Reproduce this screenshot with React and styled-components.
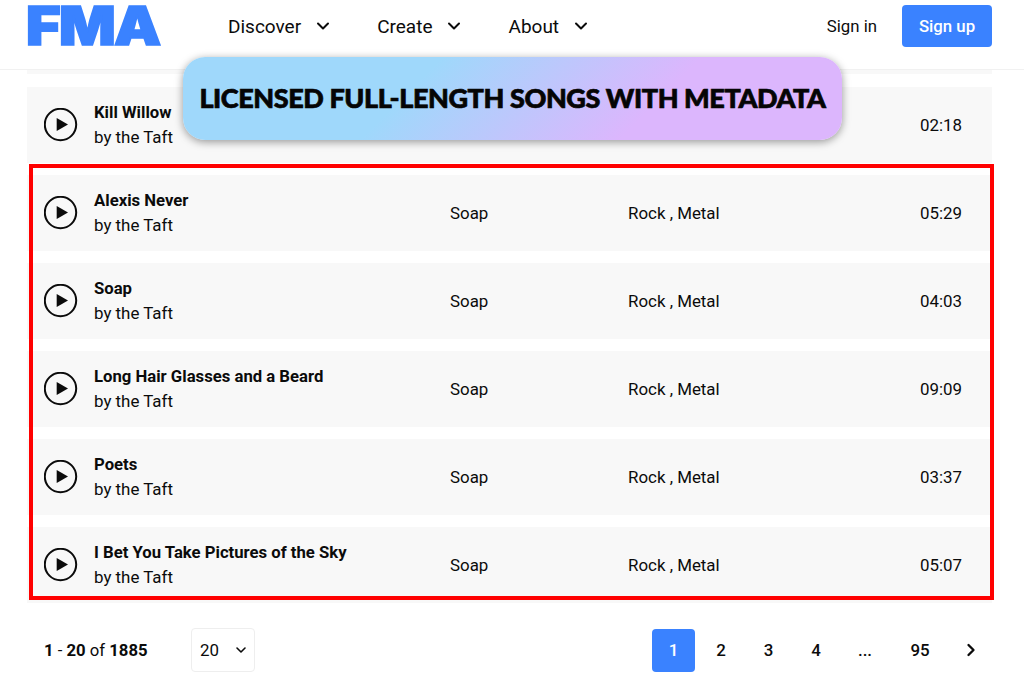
import React from "react";
import styled, { createGlobalStyle } from "styled-components";

const Global = createGlobalStyle`
  html, body { margin: 0; padding: 0; background: #fff; overflow: hidden; }
  body { font-family: Roboto, "Liberation Sans", sans-serif; color: #0b0b0b; }
`;
const Page = styled.div`position: relative; width: 1024px; height: 683px; overflow: hidden;`;
const Header = styled.header`
  display: flex; align-items: center; height: 52px; padding: 0 32px 17px 26px;
  border-bottom: 1px solid #f1f1f1;
`;
const Logo = styled.div`
  width: 150px; height: 52px; margin-right: 52px; color: #3a82ff;
  font: 900 53px/52px Inter, sans-serif; -webkit-text-stroke: 1.6px #3a82ff;
  white-space: nowrap; letter-spacing: -1.5px; transform: scaleX(1.12); transform-origin: left center;
`;
const Nav = styled.nav`display: flex; flex: 1; gap: 44px; align-items: center;`;
const NavItem = styled.div`display: flex; align-items: center; gap: 12px; font-size: 19px;`;
const Auth = styled.div`display: flex; align-items: center; gap: 25px; font-size: 16.8px;`;
const SignUp = styled.div`
  width: 90px; height: 42px; background: #3a82ff; color: #fff; border-radius: 4px; font-weight: 500;
  display: flex; align-items: center; justify-content: center;
`;
const List = styled.main`display: flex; flex-direction: column; gap: 12px; margin: 0 32px 0 27px;`;
const Sliver = styled.div`height: 4px; background: #f8f8f8; margin-bottom: 1px;`;
const Row = styled.div`
  display: grid; grid-template-columns: 33px 373px 178px 1fr auto; align-items: center;
  height: 76px; flex: none; background: #f8f8f8; padding: 0 30px 0 17px; font-size: 16.9px;
`;
const Info = styled.div`
  margin-left: 17px; display: flex; flex-direction: column; gap: 3px; line-height: 20.5px;
`;
const Title = styled.div`font-weight: 700; font-size: 16.7px;`;
const Cell = styled.div``;
const Pager = styled.footer`display: flex; align-items: center; margin: 25px 32px 0 44px; height: 44px;`;
const Count = styled.div`font-size: 16.7px; width: 147px; b { font-weight: 700; }`;
const Select = styled.div`
  width: 64px; height: 44px; border: 1px solid #eee; border-radius: 4px; display: flex; align-items: center;
  justify-content: space-between; padding: 0 5px 0 8px; box-sizing: border-box; font-size: 16.9px;
`;
const Pages = styled.div`display: flex; align-items: center; gap: 4.5px; margin-left: auto;`;
const PageBtn = styled.div`
  width: ${p => p.$w || 43}px; height: 43px; border-radius: 4px; display: flex;
  align-items: center; justify-content: center; font-size: 16.9px; font-weight: 500;
  margin-right: ${p => p.$mr || 0}px;
  background: ${p => (p.$active ? "#3a82ff" : "transparent")}; color: ${p => (p.$active ? "#fff" : "#0b0b0b")};
`;
const Frame = styled.div`
  position: absolute; left: 29px; top: 164px; width: 965px; height: 436px; box-sizing: border-box;
  border: 4px solid #ff0000; pointer-events: none;
`;
const Banner = styled.div`
  position: absolute; left: 183px; top: 57px; width: 659px; height: 83px; border-radius: 22px;
  display: flex; align-items: center; justify-content: center; padding-bottom: 2px; box-sizing: border-box;
  background: linear-gradient(135deg, #9fd8fb 0%, #9fd8fb 35%, #dcb6fd 70%, #dcb6fd 100%);
  box-shadow: 0 2px 9px rgba(0,0,0,.4);
  font: 900 27px/1 Lato, sans-serif; color: #050505; -webkit-text-stroke: .7px #050505;
  letter-spacing: -.42px; white-space: nowrap;
`;

const Chevron = ({ size = 20, weight = 2.4, dir = "down" }) => (
  <svg width={size} height={size} viewBox="0 0 24 24" fill="none" stroke="currentColor" strokeWidth={weight} strokeLinecap="round" strokeLinejoin="round">
    <path d={dir === "down" ? "M6 9l6 6 6-6" : "M9 6l6 6-6 6"} />
  </svg>
);
const Play = () => (
  <svg width="34" height="34" viewBox="0 0 34 34" style={{ display: "block" }}>
    <circle cx="16.5" cy="16.5" r="15.7" fill="none" stroke="#0b0b0b" strokeWidth="2" />
    <path d="M12.7 10L24 16.5 12.7 23z" fill="#0b0b0b" />
  </svg>
);

const songs = [
  ["Kill Willow", "02:18"],
  ["Alexis Never", "05:29"],
  ["Soap", "04:03"],
  ["Long Hair Glasses and a Beard", "09:09"],
  ["Poets", "03:37"],
  ["I Bet You Take Pictures of the Sky", "05:07"],
];

export default function App() {
  return (
    <Page>
      <Global />
      <Header>
        <Logo>FMA</Logo>
        <Nav>
          {["Discover", "Create", "About"].map(n => (
            <NavItem key={n}>{n}<Chevron /></NavItem>
          ))}
        </Nav>
        <Auth><span>Sign in</span><SignUp>Sign up</SignUp></Auth>
      </Header>
      <List>
        <Sliver />
        {songs.map(([t, d]) => (
          <Row key={t}>
            <Play />
            <Info><Title>{t}</Title><div>by the Taft</div></Info>
            <Cell>Soap</Cell>
            <Cell>Rock , Metal</Cell>
            <Cell>{d}</Cell>
          </Row>
        ))}
      </List>
      <Pager>
        <Count><b>1</b> - <b>20</b> of <b>1885</b></Count>
        <Select>20<Chevron size={16} /></Select>
        <Pages>
          <PageBtn $active>1</PageBtn>
          <PageBtn>2</PageBtn>
          <PageBtn>3</PageBtn>
          <PageBtn>4</PageBtn>
          <PageBtn $w={46}>...</PageBtn>
          <PageBtn $w={55}>95</PageBtn>
          <PageBtn $w={38} $mr={2}><Chevron size={20} dir="right" weight={2.8} /></PageBtn>
        </Pages>
      </Pager>
      <Frame />
      <Banner>LICENSED FULL-LENGTH SONGS WITH METADATA</Banner>
    </Page>
  );
}
